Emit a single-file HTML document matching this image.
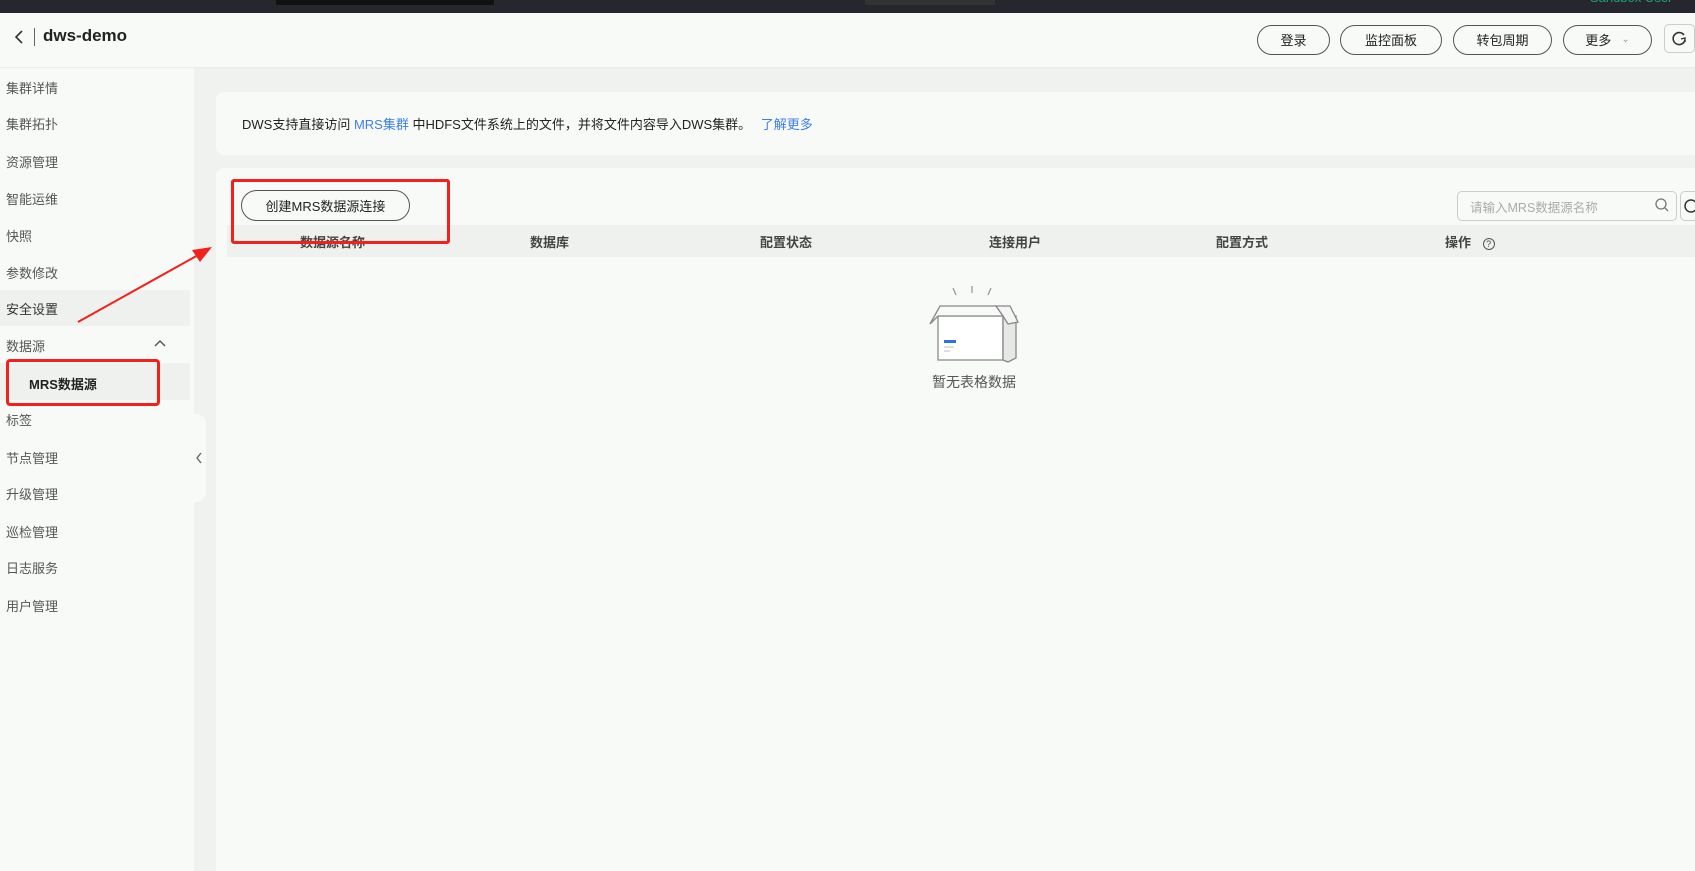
<!DOCTYPE html>
<html><head><meta charset="utf-8"><style>
*{margin:0;padding:0;box-sizing:border-box}
body{width:1695px;height:871px;overflow:hidden;background:#f8faf8;font-family:"Liberation Sans","Noto Sans CJK SC",sans-serif;position:relative;color:#333}
.a{position:absolute}
.top{left:0;top:0;width:1695px;height:13px;background:#25262e}
.hdr{left:0;top:13px;width:1695px;height:55px;background:#f8faf8;border-bottom:1px solid #eceeec}
.btn{position:absolute;top:25px;height:30px;border:1.5px solid #555;border-radius:15px;font-size:13px;display:flex;align-items:center;justify-content:center;background:#f8faf8;color:#222;line-height:1}
.side{left:0;top:68px;width:194px;height:803px;background:#f8faf8}
.si{position:absolute;left:6px;font-size:13px;color:#555}
.main{left:194px;top:68px;width:1501px;height:803px;background:#f0f2f0}
.th{position:absolute;top:232px;font-size:13px;font-weight:bold;color:#444}
</style></head><body>
<div class="a top"></div>
<div class="a" style="left:276px;top:0;width:218px;height:5px;background:#111"></div>
<div class="a" style="left:865px;top:0;width:130px;height:5px;background:#333"></div>
<div class="a" style="left:1590px;top:-10px;font-size:13px;color:#1fa36d">Sandbox User</div>
<div class="a hdr"></div>
<svg class="a" style="left:12px;top:29px" width="14" height="16"><path d="M10 2 L4 8 L10 14" stroke="#333" stroke-width="1.6" fill="none"/></svg>
<div class="a" style="left:34px;top:28px;width:1px;height:18px;background:#666"></div>
<div class="a" style="left:43px;top:26px;font-size:17px;font-weight:bold;color:#222">dws-demo</div>
<div class="btn" style="left:1257px;width:73px">登录</div>
<div class="btn" style="left:1340px;width:102px">监控面板</div>
<div class="btn" style="left:1453px;width:99px">转包周期</div>
<div class="btn" style="left:1563px;width:89px">更多 <span style="font-size:10px;color:#999;margin-left:10px">&#8964;</span></div>
<div class="a" style="left:1664px;top:24px;width:31px;height:29px;border:1.5px solid #ccc;border-radius:5px;background:#f8faf8"></div>
<svg class="a" style="left:1671px;top:30px" width="17" height="17"><path d="M13 5 A6 6 0 1 0 14 10" stroke="#333" stroke-width="1.6" fill="none"/><path d="M14 12 L14 8 L10 9" stroke="#333" stroke-width="1.4" fill="none"/></svg>
<div class="a main"></div>
<div class="a side"></div>
<div class="a" style="left:0;top:290px;width:190px;height:36px;background:#eff1ef"></div>
<div class="a" style="left:0;top:363px;width:190px;height:37px;background:#eff1ef"></div>
<div class="si" style="top:78px">集群详情</div>
<div class="si" style="top:114px">集群拓扑</div>
<div class="si" style="top:152px">资源管理</div>
<div class="si" style="top:189px">智能运维</div>
<div class="si" style="top:226px">快照</div>
<div class="si" style="top:263px">参数修改</div>
<div class="si" style="top:299px;color:#333">安全设置</div>
<div class="si" style="top:336px">数据源</div>
<svg class="a" style="left:153px;top:338px" width="14" height="10"><path d="M2 8 L7 3 L12 8" stroke="#555" stroke-width="1.5" fill="none"/></svg>
<div class="si" style="top:374px;left:29px;font-weight:bold;color:#222">MRS数据源</div>
<div class="si" style="top:410px">标签</div>
<div class="si" style="top:448px">节点管理</div>
<div class="si" style="top:484px">升级管理</div>
<div class="si" style="top:522px">巡检管理</div>
<div class="si" style="top:558px">日志服务</div>
<div class="si" style="top:596px">用户管理</div>
<div class="a" style="left:186px;top:414px;width:20px;height:88px;background:#f8faf8;border-radius:0 10px 10px 0"></div>
<svg class="a" style="left:195px;top:452px" width="8" height="12"><path d="M6 1 L2 6 L6 11" stroke="#666" stroke-width="1.4" fill="none"/></svg>
<div class="a" style="left:216px;top:92px;width:1479px;height:63px;background:#f8faf8;border-radius:8px 0 0 8px"></div>
<div class="a" style="left:242px;top:114px;font-size:13px;color:#222">DWS支持直接访问 <span style="color:#3c7fe8">MRS集群</span> 中HDFS文件系统上的文件，并将文件内容导入DWS集群。 <span style="color:#3c7fe8;margin-left:6px">了解更多</span></div>
<div class="a" style="left:216px;top:168px;width:1479px;height:703px;background:#f8faf8;border-radius:8px 0 0 0"></div>
<div class="a" style="left:227px;top:225px;width:1468px;height:32px;background:#eff1ef"></div>
<div class="a" style="left:241px;top:190px;width:169px;height:31px;border:1.5px solid #555;border-radius:16px;font-size:13px;display:flex;align-items:center;justify-content:center;background:#f8faf8;color:#222">创建MRS数据源连接</div>
<div class="th" style="left:300px">数据源名称</div>
<div class="th" style="left:530px">数据库</div>
<div class="th" style="left:760px">配置状态</div>
<div class="th" style="left:989px">连接用户</div>
<div class="th" style="left:1216px">配置方式</div>
<div class="th" style="left:1445px">操作 <span style="display:inline-block;width:12px;height:12px;border:1px solid #555;border-radius:50%;font-size:9px;line-height:10px;text-align:center;margin-left:8px;font-weight:normal">?</span></div>
<div class="a" style="left:1457px;top:191px;width:220px;height:30px;border:1px solid #ccc;border-radius:5px;background:#f8faf8;font-size:12.5px;color:#aaa;padding:5px 0 0 12px">请输入MRS数据源名称</div>
<svg class="a" style="left:1654px;top:197px" width="16" height="16"><circle cx="7" cy="7" r="5" stroke="#777" stroke-width="1.3" fill="none"/><path d="M11 11 L14 14" stroke="#777" stroke-width="1.3"/></svg>
<div class="a" style="left:1680px;top:191px;width:20px;height:30px;border:1px solid #ccc;border-radius:5px"></div>
<svg class="a" style="left:1683px;top:198px" width="14" height="16"><circle cx="8" cy="8" r="6" stroke="#333" stroke-width="1.5" fill="none"/></svg>
<div class="a" style="left:231px;top:179px;width:219px;height:65px;border:3.5px solid #f4201c;border-radius:3px"></div>
<div class="a" style="left:6px;top:359px;width:154px;height:47px;border:3.5px solid #f4201c;border-radius:4px"></div>
<svg class="a" style="left:0;top:0" width="260" height="360"><path d="M78 322 L200 254" stroke="#f4201c" stroke-width="2"/><path d="M212 247 L192 250 L200 262 Z" fill="#f4201c"/></svg>
<svg class="a" style="left:928px;top:284px" width="92" height="80"><path d="M25 4 L28 11 M44 2 L44 9 M63 4 L60 11" stroke="#999" stroke-width="1.3"/><path d="M10 32 L10 76 L75 76 L75 32 Z" fill="#fff" stroke="#888" stroke-width="1.3"/><path d="M75 32 L88 32 L88 74 L80 78 L75 76 Z" fill="#e6e8e6" stroke="#888" stroke-width="1.3"/><path d="M2 40 L12 22 L68 22 L75 32 L10 32 Z" fill="#f8faf8" stroke="#888" stroke-width="1.3"/><path d="M68 22 L82 22 L90 38 L80 40 L75 32 Z" fill="#f4f5f4" stroke="#888" stroke-width="1.3"/><rect x="16" y="56" width="12" height="3" fill="#2a72e6"/><path d="M16 63 L26 63 M16 67 L22 67" stroke="#bbb"/></svg>
<div class="a" style="left:930px;top:372px;width:88px;text-align:center;font-size:14px;color:#555">暂无表格数据</div>
</body></html>
